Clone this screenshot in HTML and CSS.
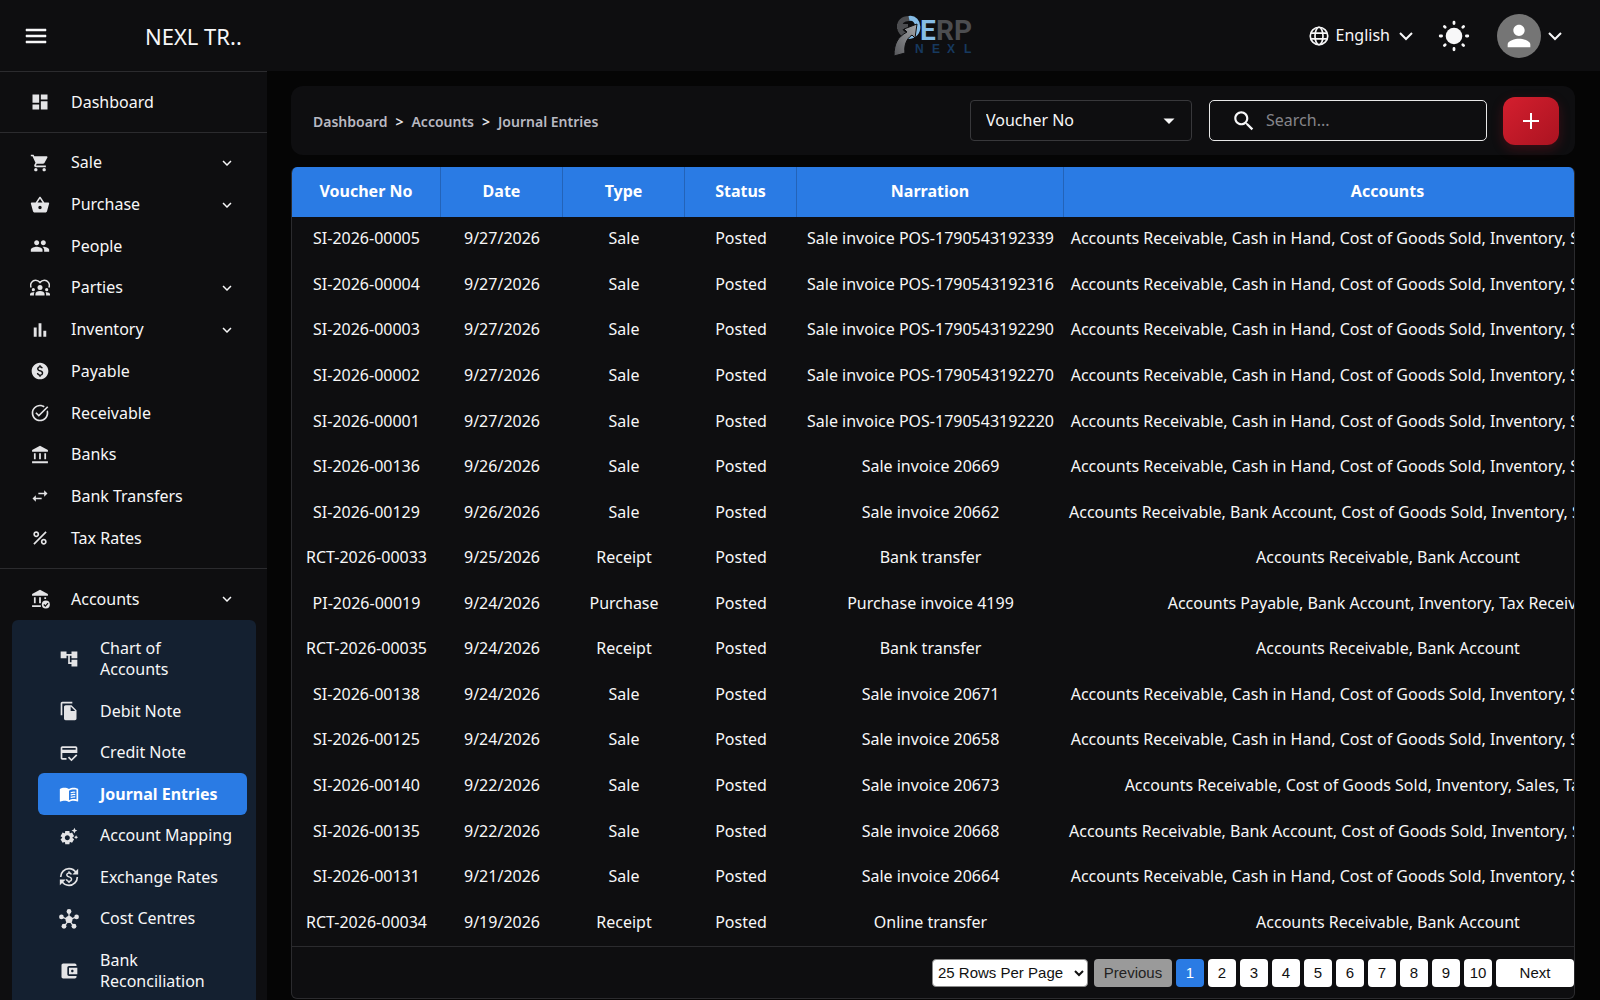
FILE: index.html
```html
<!DOCTYPE html>
<html lang="en">
<head>
<meta charset="utf-8">
<meta name="viewport" content="width=device-width, initial-scale=1">
<title>Journal Entries</title>
<link rel="stylesheet" href="styles.css">
</head>
<body>
<svg class="sprite" aria-hidden="true">
  <symbol id="i-dashboard" viewBox="0 0 24 24"><path d="M3 13h8V3H3v10zm0 8h8v-6H3v6zm10 0h8V11h-8v10zm0-18v6h8V3h-8z"/></symbol>
  <symbol id="i-cart" viewBox="0 0 24 24"><path d="M7 18c-1.1 0-1.99.9-1.99 2S5.9 22 7 22s2-.9 2-2-.9-2-2-2zM1 2v2h2l3.6 7.59-1.35 2.45c-.16.28-.25.61-.25.96 0 1.1.9 2 2 2h12v-2H7.42c-.14 0-.25-.11-.25-.25l.03-.12.9-1.63h7.45c.75 0 1.41-.41 1.75-1.03l3.58-6.49c.08-.14.12-.31.12-.48 0-.55-.45-1-1-1H5.21l-.94-2H1zm16 16c-1.1 0-1.99.9-1.99 2s.89 2 1.99 2 2-.9 2-2-.9-2-2-2z"/></symbol>
  <symbol id="i-basket" viewBox="0 0 24 24"><path d="M17.21 9l-4.38-6.56c-.19-.28-.51-.42-.83-.42-.32 0-.64.14-.83.43L6.79 9H2c-.55 0-1 .45-1 1 0 .09.01.18.04.27l2.54 9.27c.23.84 1 1.46 1.92 1.46h13c.92 0 1.69-.62 1.93-1.46l2.54-9.27L23 10c0-.55-.45-1-1-1h-4.79zM9 9l3-4.4L15 9H9zm3 8c-1.1 0-2-.9-2-2s.9-2 2-2 2 .9 2 2-.9 2-2 2z"/></symbol>
  <symbol id="i-people" viewBox="0 0 24 24"><path d="M16 11c1.66 0 2.99-1.34 2.99-3S17.66 5 16 5c-1.66 0-3 1.34-3 3s1.34 3 3 3zm-8 0c1.66 0 2.99-1.34 2.99-3S9.66 5 8 5C6.34 5 5 6.34 5 8s1.34 3 3 3zm0 2c-2.33 0-7 1.17-7 3.5V19h14v-2.5c0-2.33-4.67-3.5-7-3.5zm8 0c-.29 0-.62.02-.97.05 1.16.84 1.97 1.97 1.97 3.45V19h6v-2.5c0-2.33-4.67-3.5-7-3.5z"/></symbol>
  <symbol id="i-parties" viewBox="0 0 24 24"><path fill="none" stroke="currentColor" stroke-width="1.8" d="M1.3 11.5C-.6 6.500 3 2.800 6.800 2.800c2.500 0 4 1.200 5.200 2.700 1.200-1.500 2.700-2.700 5.200-2.700 3.800 0 7.400 3.700 5.500 8.700"/><circle cx="12" cy="11.500" r="3"/><circle cx="4" cy="14" r="1.900"/><circle cx="20" cy="14" r="1.900"/><path d="M6.500 21v-1.800c0-2.300 2.500-3.600 5.500-3.600s5.500 1.300 5.500 3.600V21zM0 21v-1.500C0 18 1.800 17 4 17c.5 0 .9 0 1.300.1-.4.700-.6 1.400-.6 2.200V21zM24 21v-1.500c0-1.500-1.800-2.500-4-2.500-.5 0-.9 0-1.300.1.400.7.600 1.400.6 2.200V21z"/></symbol>
  <symbol id="i-bars" viewBox="0 0 24 24"><path d="M4.500 9H8v11H4.500zM10.300 4h3.400v16h-3.400zM16 13h3.500v7H16z"/></symbol>
  <symbol id="i-paid" viewBox="0 0 24 24"><path d="M12 2C6.480 2 2 6.480 2 12s4.480 10 10 10 10-4.480 10-10S17.520 2 12 2zm.88 15.760V19h-1.750v-1.290c-.74-.18-2.390-.77-3.020-2.960l1.650-.67c.06.22.58 2.090 2.400 2.090.93 0 1.980-.48 1.980-1.610 0-.96-.7-1.460-2.280-2.030-1.100-.39-3.350-1.030-3.350-3.310 0-.1.010-2.400 2.620-2.960V5h1.750v1.240c1.840.32 2.510 1.790 2.660 2.230l-1.580.67c-.11-.35-.59-1.340-1.900-1.340-.7 0-1.810.37-1.810 1.390 0 .95.86 1.310 2.640 1.900 2.400.83 3.010 2.050 3.010 3.450 0 2.630-2.500 3.130-3.020 3.220z"/></symbol>
  <symbol id="i-task" viewBox="0 0 24 24"><path d="M22 5.180L10.590 16.600l-4.240-4.240 1.410-1.410 2.830 2.830 10-10L22 5.180zm-2.210 5.040c.13.57.21 1.170.21 1.780 0 4.420-3.580 8-8 8s-8-3.580-8-8 3.580-8 8-8c1.580 0 3.040.46 4.280 1.250l1.440-1.440C16.100 2.670 14.130 2 12 2 6.480 2 2 6.480 2 12s4.480 10 10 10 10-4.480 10-10c0-1.190-.22-2.330-.6-3.390l-1.610 1.610z"/></symbol>
  <symbol id="i-bank" viewBox="0 0 24 24"><path d="M12 1L2.500 6v2h19V6zM4.700 10h2.100v7H4.700zM10.950 10h2.100v7h-2.100zM17.200 10h2.100v7h-2.100zM2.500 19.500h19v2.300h-19z"/></symbol>
  <symbol id="i-swap" viewBox="0 0 24 24"><path d="M6.990 11L3 15l3.990 4v-3H14v-2H6.990v-3zM21 9l-3.990-4v3H10v2h7.010v3L21 9z"/></symbol>
  <symbol id="i-percent" viewBox="0 0 24 24"><path d="M7.500 11C9.430 11 11 9.430 11 7.500S9.430 4 7.500 4 4 5.570 4 7.500 5.570 11 7.500 11zm0-5C8.330 6 9 6.670 9 7.500S8.330 9 7.500 9 6 8.330 6 7.500 6.670 6 7.500 6zM4 18.580L18.590 4 20 5.410 5.420 20zM16.500 13c-1.930 0-3.500 1.570-3.500 3.500s1.570 3.500 3.500 3.500 3.500-1.570 3.500-3.500-1.570-3.500-3.500-3.500zm0 5c-.83 0-1.500-.67-1.500-1.500s.67-1.500 1.500-1.500 1.500.67 1.500 1.500-.67 1.500-1.500 1.500z"/></symbol>
  <symbol id="i-bankcheck" viewBox="0 0 24 24"><path d="M12 1L2.500 6v2h19V6zM4.700 10h2.100v7H4.700zM10.950 10h2.100v7h-2.100zM17.200 10h2.100v2h-2.100zM2.500 19.500H13v2.200H2.500z"/><circle cx="19" cy="18.500" r="4.800"/><path class="tick" d="M16.500 18.600l1.900 1.900 3.200-3.500"/></symbol>
  <symbol id="i-tree" viewBox="0 0 24 24"><path d="M22 11V3h-7v3H9V3H2v8h7V8h2v10h4v3h7v-8h-7v3h-2V8h2v3z"/></symbol>
  <symbol id="i-copy" viewBox="0 0 24 24"><path d="M16 1H4c-1.100 0-2 .9-2 2v14h2V3h12V1zm-1 4l6 6v10c0 1.100-.9 2-2 2H7.990C6.890 23 6 22.100 6 21l.01-14c0-1.100.89-2 1.990-2h7zm-1 7h5.500L14 6.500V12z"/></symbol>
  <symbol id="i-credit" viewBox="0 0 24 24"><path d="M20 4H4c-1.110 0-1.990.89-1.990 2L2 18c0 1.110.89 2 2 2h5v-2H4v-6h18V6c0-1.110-.89-2-2-2zm0 4H4V6h16v2zm-5.070 11.170l-2.830-2.830-1.410 1.410L14.930 22 22 14.930l-1.410-1.410-5.660 5.650z"/></symbol>
  <symbol id="i-book" viewBox="0 0 24 24"><path d="M21 5c-1.110-.35-2.330-.5-3.500-.5-1.950 0-4.050.4-5.500 1.500-1.450-1.100-3.550-1.500-5.500-1.500S2.450 4.900 1 6v14.650c0 .25.25.5.5.5.1 0 .15-.05.25-.05C3.100 20.450 5.050 20 6.500 20c1.950 0 4.050.4 5.500 1.500 1.350-.85 3.800-1.500 5.500-1.500 1.650 0 3.350.3 4.750 1.050.1.050.15.050.25.050.25 0 .5-.25.5-.5V6c-.6-.45-1.250-.75-2-1zm0 13.500c-1.100-.35-2.300-.5-3.500-.5-1.700 0-4.150.65-5.500 1.500V8c1.350-.85 3.800-1.500 5.500-1.500 1.200 0 2.400.15 3.500.5v11.500z"/><path fill="none" stroke="currentColor" stroke-width="1.500" d="M14 10.500c1.700-.7 3.800-.9 5.500-.6M14 13.300c1.700-.7 3.800-.9 5.500-.6M14 16.100c1.700-.7 3.800-.9 5.500-.6"/></symbol>
  <symbol id="i-gear" viewBox="0 0 24 24"><path d="M17.410 6.590 15 5.500l2.410-1.090L18.500 2l1.090 2.410L22 5.500l-2.410 1.090L18.500 9l-1.090-2.410zm3.870 6.130L20.500 11l-.78 1.720-1.720.78 1.720.78.78 1.720.78-1.720L23 13.500l-1.720-.78zm-5.040 1.650 1.940 1.470-2.500 4.330-2.240-.94c-.2.13-.42.26-.64.37l-.3 2.400h-5l-.3-2.410c-.22-.11-.43-.23-.64-.37l-2.240.94-2.500-4.330 1.940-1.470c-.01-.11-.01-.24-.01-.36s0-.25.010-.37l-1.940-1.470 2.500-4.330 2.240.94c.2-.13.42-.26.64-.37L7.500 6h5l.3 2.410c.22.11.43.23.64.37l2.240-.94 2.500 4.330-1.940 1.470c.010.12.010.24.010.37s0 .24-.010.36zM13 14c0-1.660-1.340-3-3-3s-3 1.340-3 3 1.340 3 3 3 3-1.340 3-3z"/></symbol>
  <symbol id="i-exchange" viewBox="0 0 24 24"><path fill="none" stroke="currentColor" stroke-width="2" d="M2 12C2 6.500 6.500 2 12 2c3.600 0 6.700 1.900 8.500 4.700M22 12c0 5.500-4.500 10-10 10-3.600 0-6.700-1.900-8.500-4.700"/><path d="M23 2v7h-7zM1 22v-7h7z"/><path transform="translate(0 .2)" d="M12.880 17.760V19h-1.750v-1.290c-.74-.18-2.390-.77-3.020-2.960l1.650-.67c.06.22.58 2.090 2.400 2.090.93 0 1.980-.48 1.980-1.610 0-.96-.7-1.460-2.280-2.030-1.100-.39-3.350-1.030-3.350-3.310 0-.1.010-2.400 2.620-2.960V5h1.750v1.240c1.840.32 2.510 1.790 2.660 2.230l-1.580.67c-.11-.35-.59-1.340-1.900-1.340-.7 0-1.810.37-1.810 1.390 0 .95.86 1.310 2.640 1.900 2.400.83 3.010 2.050 3.010 3.450 0 2.630-2.500 3.130-3.020 3.220z"/></symbol>
  <symbol id="i-hub" viewBox="0 0 24 24"><path fill="none" stroke="currentColor" stroke-width="1.600" d="M12 3v10M3 9.500l9 3.500 9-3.500M6.500 20.500L12 13l5.500 7.500"/><circle cx="12" cy="12.500" r="4.200"/><circle cx="12" cy="3" r="2.900"/><circle cx="2.900" cy="9.500" r="2.800"/><circle cx="21.100" cy="9.500" r="2.800"/><circle cx="6" cy="20.700" r="2.900"/><circle cx="18" cy="20.700" r="2.900"/></symbol>
  <symbol id="i-wallet" viewBox="0 0 24 24"><path d="M21 18v1c0 1.100-.9 2-2 2H5c-1.110 0-2-.9-2-2V5c0-1.100.89-2 2-2h14c1.100 0 2 .9 2 2v1h-9c-1.110 0-2 .9-2 2v8c0 1.100.89 2 2 2h9zm-9-2h10V8H12v8zm4-2.500c-.83 0-1.500-.67-1.500-1.500s.67-1.500 1.500-1.500 1.500.67 1.500 1.500-.67 1.500-1.500 1.500z"/></symbol>
  <symbol id="i-chevron" viewBox="0 0 24 24"><path d="M7.410 8.590L12 13.170l4.590-4.580L18 10l-6 6-6-6z"/></symbol>
</svg>

<header class="topbar">
  <button class="icon-btn menu-btn" aria-label="Toggle menu">
    <svg viewBox="0 0 24 24" width="24" height="24"><path d="M2 5h20v2H2zM2 11h20v2H2zM2 17h20v2H2z" stroke="currentColor" stroke-width=".5"/></svg>
  </button>
  <div class="company">NEXL TR..</div>
  <div class="logo">
    <svg viewBox="0 0 84 46" width="84" height="46" role="img" aria-label="ERP NEXL">
      <defs><linearGradient id="steel" x1="0" y1="1" x2="1" y2="0"><stop offset="0" stop-color="#55565a"/><stop offset="1" stop-color="#a4a6a8"/></linearGradient></defs>
      <path fill="none" stroke="#4c4d50" stroke-width="5" d="M13 22C4 22 1.500 5.500 15 5.500M3 13.500h11"/>
      <path fill="none" stroke="#85bce6" stroke-width="5" d="M15 5.500c11-2 13 18-1 18"/>
      <path fill="url(#steel)" stroke="#0e0e10" d="M0 43c0-13 4-19 13-24l-3-3 13-5-2 14-3-3c-6 4-8 11-7 18z"/>
      <g class="logo-word"><text class="logo-e" x="26" y="27">E</text><text x="42" y="27">RP</text></g>
      <text class="logo-sub" x="21 38 53 70" y="40">NEXL</text>
    </svg>
  </div>
  <div class="tools">
    <button class="lang">
      <svg class="line-icon" viewBox="0 0 24 24" width="20" height="20"><circle cx="12" cy="12" r="10.500"/><ellipse cx="12" cy="12" rx="4.800" ry="10.500"/><path d="M2.500 8.500h19M2.500 15.500h19"/></svg>
      <span>English</span>
      <svg class="caret" viewBox="0 0 24 24" width="24" height="24"><path d="M6 9l6 6 6-6"/></svg>
    </button>
    <button class="icon-btn" aria-label="Light theme">
      <svg viewBox="0 0 32 32" width="32" height="32"><circle cx="16" cy="16" r="8.300"/><path fill="none" stroke="currentColor" stroke-width="2.800" stroke-linecap="round" d="M16 2.200v1.400M16 28.400v1.400M2.200 16h1.400M28.400 16h1.400M6.400 6.400l.8.8M24.800 24.800l.8.8M6.400 25.600l.8-.8M24.800 7.200l.8-.8"/></svg>
    </button>
    <button class="account" aria-label="Account">
      <span class="avatar"><svg viewBox="0 0 24 24" width="34" height="34"><path d="M12 12c2.210 0 4-1.790 4-4s-1.790-4-4-4-4 1.790-4 4 1.790 4 4 4zm0 2c-2.670 0-8 1.340-8 4v2h16v-2c0-2.660-5.330-4-8-4z"/></svg></span>
      <svg class="caret" viewBox="0 0 24 24" width="24" height="24"><path d="M6 9l6 6 6-6"/></svg>
    </button>
  </div>
</header>

<div class="shell">
  <nav class="sidebar" aria-label="Main">
    <ul class="nav-group">
      <li><a class="nav-item" href="#"><svg class="ico"><use href="#i-dashboard"/></svg><span>Dashboard</span></a></li>
    </ul>
    <ul class="nav-group ledger">
      <li><button class="nav-item"><svg class="ico"><use href="#i-cart"/></svg><span>Sale</span><svg class="more"><use href="#i-chevron"/></svg></button></li>
      <li><button class="nav-item"><svg class="ico"><use href="#i-basket"/></svg><span>Purchase</span><svg class="more"><use href="#i-chevron"/></svg></button></li>
      <li><a class="nav-item" href="#"><svg class="ico"><use href="#i-people"/></svg><span>People</span></a></li>
      <li><button class="nav-item"><svg class="ico"><use href="#i-parties"/></svg><span>Parties</span><svg class="more"><use href="#i-chevron"/></svg></button></li>
      <li><button class="nav-item"><svg class="ico"><use href="#i-bars"/></svg><span>Inventory</span><svg class="more"><use href="#i-chevron"/></svg></button></li>
      <li><a class="nav-item" href="#"><svg class="ico"><use href="#i-paid"/></svg><span>Payable</span></a></li>
      <li><a class="nav-item" href="#"><svg class="ico"><use href="#i-task"/></svg><span>Receivable</span></a></li>
      <li><a class="nav-item" href="#"><svg class="ico"><use href="#i-bank"/></svg><span>Banks</span></a></li>
      <li><a class="nav-item" href="#"><svg class="ico"><use href="#i-swap"/></svg><span>Bank Transfers</span></a></li>
      <li><a class="nav-item" href="#"><svg class="ico"><use href="#i-percent"/></svg><span>Tax Rates</span></a></li>
    </ul>
    <ul class="nav-group">
      <li><button class="nav-item" aria-expanded="true"><svg class="ico"><use href="#i-bankcheck"/></svg><span>Accounts</span><svg class="more"><use href="#i-chevron"/></svg></button>
        <ul class="subnav">
          <li><a class="nav-item two-line" href="#"><svg class="ico"><use href="#i-tree"/></svg><span>Chart of Accounts</span></a></li>
          <li><a class="nav-item" href="#"><svg class="ico"><use href="#i-copy"/></svg><span>Debit Note</span></a></li>
          <li><a class="nav-item" href="#"><svg class="ico"><use href="#i-credit"/></svg><span>Credit Note</span></a></li>
          <li><a class="nav-item active" href="#" aria-current="page"><svg class="ico"><use href="#i-book"/></svg><span>Journal Entries</span></a></li>
          <li><a class="nav-item" href="#"><svg class="ico"><use href="#i-gear"/></svg><span>Account Mapping</span></a></li>
          <li><a class="nav-item" href="#"><svg class="ico"><use href="#i-exchange"/></svg><span>Exchange Rates</span></a></li>
          <li><a class="nav-item" href="#"><svg class="ico"><use href="#i-hub"/></svg><span>Cost Centres</span></a></li>
          <li><a class="nav-item two-line" href="#"><svg class="ico"><use href="#i-wallet"/></svg><span>Bank Reconciliation</span></a></li>
        </ul>
      </li>
    </ul>
  </nav>

  <main class="content">
    <div class="toolbar">
      <nav class="crumbs" aria-label="Breadcrumb">
        <a href="#">Dashboard</a><span>&gt;</span><a href="#">Accounts</a><span>&gt;</span><a href="#">Journal Entries</a>
      </nav>
      <div class="filter">
        <select aria-label="Search by"><option>Voucher No</option></select>
        <svg viewBox="0 0 24 24" width="24" height="24"><path d="M6.500 9.500l5.500 5.500 5.500-5.500z"/></svg>
      </div>
      <label class="search">
        <svg viewBox="0 0 24 24" width="26" height="26"><path d="M15.500 14h-.79l-.28-.27C15.410 12.590 16 11.110 16 9.500 16 5.910 13.090 3 9.500 3S3 5.910 3 9.500 5.910 16 9.500 16c1.610 0 3.090-.59 4.230-1.570l.27.28v.79l5 4.990L20.490 19l-4.990-5zm-6 0C7.010 14 5 11.990 5 9.500S7.010 5 9.500 5 14 7.010 14 9.500 11.990 14 9.500 14z"/></svg>
        <input type="text" placeholder="Search..." aria-label="Search">
      </label>
      <button class="add" aria-label="Add journal entry"><svg viewBox="0 0 16 16" width="16" height="16"><path d="M7 0h2v7h7v2H9v7H7V9H0V7h7z"/></svg></button>
    </div>

    <section class="panel">
      <div class="scroller">
        <table class="entries">
          <colgroup><col class="c-no"><col class="c-date"><col class="c-type"><col class="c-status"><col class="c-narr"><col class="c-acc"></colgroup>
          <thead><tr><th>Voucher No</th><th>Date</th><th>Type</th><th>Status</th><th>Narration</th><th>Accounts</th></tr></thead>
          <tbody>
            <tr><td>SI-2026-00005</td><td>9/27/2026</td><td>Sale</td><td>Posted</td><td>Sale invoice POS-1790543192339</td><td>Accounts Receivable, Cash in Hand, Cost of Goods Sold, Inventory, Sales, Tax Payable</td></tr>
            <tr><td>SI-2026-00004</td><td>9/27/2026</td><td>Sale</td><td>Posted</td><td>Sale invoice POS-1790543192316</td><td>Accounts Receivable, Cash in Hand, Cost of Goods Sold, Inventory, Sales, Tax Payable</td></tr>
            <tr><td>SI-2026-00003</td><td>9/27/2026</td><td>Sale</td><td>Posted</td><td>Sale invoice POS-1790543192290</td><td>Accounts Receivable, Cash in Hand, Cost of Goods Sold, Inventory, Sales, Tax Payable</td></tr>
            <tr><td>SI-2026-00002</td><td>9/27/2026</td><td>Sale</td><td>Posted</td><td>Sale invoice POS-1790543192270</td><td>Accounts Receivable, Cash in Hand, Cost of Goods Sold, Inventory, Sales, Tax Payable</td></tr>
            <tr><td>SI-2026-00001</td><td>9/27/2026</td><td>Sale</td><td>Posted</td><td>Sale invoice POS-1790543192220</td><td>Accounts Receivable, Cash in Hand, Cost of Goods Sold, Inventory, Sales, Tax Payable</td></tr>
            <tr><td>SI-2026-00136</td><td>9/26/2026</td><td>Sale</td><td>Posted</td><td>Sale invoice 20669</td><td>Accounts Receivable, Cash in Hand, Cost of Goods Sold, Inventory, Sales, Tax Payable</td></tr>
            <tr><td>SI-2026-00129</td><td>9/26/2026</td><td>Sale</td><td>Posted</td><td>Sale invoice 20662</td><td>Accounts Receivable, Bank Account, Cost of Goods Sold, Inventory, Sales, Tax Payable</td></tr>
            <tr><td>RCT-2026-00033</td><td>9/25/2026</td><td>Receipt</td><td>Posted</td><td>Bank transfer</td><td>Accounts Receivable, Bank Account</td></tr>
            <tr><td>PI-2026-00019</td><td>9/24/2026</td><td>Purchase</td><td>Posted</td><td>Purchase invoice 4199</td><td>Accounts Payable, Bank Account, Inventory, Tax Receivable</td></tr>
            <tr><td>RCT-2026-00035</td><td>9/24/2026</td><td>Receipt</td><td>Posted</td><td>Bank transfer</td><td>Accounts Receivable, Bank Account</td></tr>
            <tr><td>SI-2026-00138</td><td>9/24/2026</td><td>Sale</td><td>Posted</td><td>Sale invoice 20671</td><td>Accounts Receivable, Cash in Hand, Cost of Goods Sold, Inventory, Sales, Tax Payable</td></tr>
            <tr><td>SI-2026-00125</td><td>9/24/2026</td><td>Sale</td><td>Posted</td><td>Sale invoice 20658</td><td>Accounts Receivable, Cash in Hand, Cost of Goods Sold, Inventory, Sales, Tax Payable</td></tr>
            <tr><td>SI-2026-00140</td><td>9/22/2026</td><td>Sale</td><td>Posted</td><td>Sale invoice 20673</td><td>Accounts Receivable, Cost of Goods Sold, Inventory, Sales, Tax Payable</td></tr>
            <tr><td>SI-2026-00135</td><td>9/22/2026</td><td>Sale</td><td>Posted</td><td>Sale invoice 20668</td><td>Accounts Receivable, Bank Account, Cost of Goods Sold, Inventory, Sales, Tax Payable</td></tr>
            <tr><td>SI-2026-00131</td><td>9/21/2026</td><td>Sale</td><td>Posted</td><td>Sale invoice 20664</td><td>Accounts Receivable, Cash in Hand, Cost of Goods Sold, Inventory, Sales, Tax Payable</td></tr>
            <tr><td>RCT-2026-00034</td><td>9/19/2026</td><td>Receipt</td><td>Posted</td><td>Online transfer</td><td>Accounts Receivable, Bank Account</td></tr>
          </tbody>
        </table>
      </div>
      <div class="pager">
        <select aria-label="Rows per page"><option>25 Rows Per Page</option></select>
        <div class="pages">
          <button class="wide" disabled>Previous</button>
          <button class="current" aria-current="page">1</button>
          <button>2</button><button>3</button><button>4</button><button>5</button><button>6</button><button>7</button><button>8</button><button>9</button><button>10</button>
          <button class="wide">Next</button>
        </div>
      </div>
    </section>
  </main>
</div>
</body>
</html>
```
FILE: styles.css
```css
:root {
  --bg: #050505;
  --surface: #0e0e10;
  --line: #2b2b2e;
  --blue: #2a7be4;
  --text: #f7f7f8;
}

* { box-sizing: border-box; }

body {
  margin: 0;
  height: 100vh;
  display: flex;
  flex-direction: column;
  overflow: hidden;
  background: var(--bg);
  color: var(--text);
  font: 16px/21px "Noto Sans", sans-serif;
}

button, input, select { font: inherit; color: inherit; }
button { background: none; border: 0; padding: 0; cursor: pointer; }
a { color: inherit; text-decoration: none; }
ul { list-style: none; margin: 0; padding: 0; }
svg { fill: currentColor; display: block; flex: none; }
.sprite { position: absolute; width: 0; height: 0; }

/* Top bar */
.topbar {
  flex: none;
  height: 71px;
  display: flex;
  align-items: center;
  padding: 0 33px 0 24px;
  background: var(--surface);
}
.icon-btn { display: flex; }
.company {
  width: 194px;
  padding-left: 97px;
  font-size: 22px;
  line-height: 32px;
  white-space: nowrap;
}
.logo { flex: 1; display: flex; justify-content: center; padding-left: 322px; }
.logo-word { font: 700 28px Roboto, sans-serif; fill: #4c4d50; }
.logo-e { fill: #85bce6; }
.logo-sub { font: 700 12px "Liberation Sans", sans-serif; fill: #17395f; }
.tools { display: flex; align-items: center; }
.lang { display: flex; align-items: center; margin-right: 20px; }
.lang span { margin: 0 4px 0 7px; }
.line-icon { fill: none; stroke: currentColor; stroke-width: 2; }
.caret path { fill: none; stroke: currentColor; stroke-width: 2; }
.account { display: flex; align-items: center; gap: 2px; margin-left: 27px; }
.avatar {
  width: 44px;
  height: 44px;
  border-radius: 50%;
  display: flex;
  align-items: center;
  justify-content: center;
  background: #757575;
  color: #fff;
}

.shell { flex: 1; min-height: 0; display: flex; }

/* Sidebar */
.sidebar {
  flex: none;
  width: 267px;
  overflow: hidden;
  background: var(--surface);
}
.nav-group { padding: 9px 0; border-top: 1px solid var(--line); }
.ledger { display: grid; grid-auto-rows: 1fr; min-height: 436px; }
.nav-item {
  display: flex;
  align-items: center;
  width: 100%;
  height: 100%;
  min-height: 41px;
  padding: 0 31px 0 30px;
  text-align: left;
}
.nav-group > li > .nav-item { min-height: 42px; }
.ledger > li > .nav-item { min-height: 41px; }
.nav-item span { flex: 1; margin-left: 21px; }
.ico { width: 20px; height: 20px; color: #e4e4e6; }
.tick { fill: none; stroke: var(--surface); stroke-width: 1.5; }
.more { width: 18px; height: 18px; }
.subnav {
  display: grid;
  grid-template-rows: 3fr repeat(6, 2fr) 3fr;
  min-height: 390px;
  margin: 0 11px 0 12px;
  padding: 8px 9px 8px 26px;
  border-radius: 6px;
  background: #142030;
}
.subnav .nav-item { padding: 0 8px 0 21px; border-radius: 6px; }
.subnav .two-line { padding-right: 24px; }
.nav-item.active { background: var(--blue); font-weight: 700; color: #fff; }
.active .ico { color: #fff; }

/* Content */
.content {
  flex: 1;
  min-width: 0;
  display: flex;
  flex-direction: column;
  gap: 12px;
  padding: 15px 25px 1px 24px;
}
.toolbar {
  flex: none;
  height: 69px;
  display: flex;
  align-items: center;
  padding: 0 16px 0 22px;
  border-radius: 12px;
  background: var(--surface);
}
.crumbs {
  flex: 1;
  display: flex;
  gap: 8px;
  padding-top: 2px;
  font-size: 14px;
  font-weight: 600;
  color: #b9b9c2;
}
.crumbs span { color: #e6e6ea; }
.filter { position: relative; width: 222px; height: 41px; }
.filter select {
  width: 100%;
  height: 100%;
  padding: 0 15px;
  appearance: none;
  background: var(--surface);
  border: 1px solid #38383b;
  border-radius: 4px;
}
.filter svg { position: absolute; right: 11px; top: 9px; pointer-events: none; }
.search {
  display: flex;
  align-items: center;
  gap: 9px;
  width: 278px;
  height: 41px;
  margin: 0 16px 0 17px;
  padding-left: 21px;
  border: 1px solid #e8e8e8;
  border-radius: 5px;
}
.search input { flex: 1; min-width: 0; padding: 0; border: 0; outline: 0; background: none; }
.search input::placeholder { color: #85858a; opacity: 1; }
.add {
  width: 56px;
  height: 48px;
  display: flex;
  align-items: center;
  justify-content: center;
  border-radius: 12px;
  background: linear-gradient(135deg, #d41f2e, #ab1321);
  box-shadow: 0 4px 12px rgba(200, 20, 40, .25);
  color: #fff;
}

/* Entries table */
.panel {
  flex: 1;
  min-height: 0;
  display: flex;
  flex-direction: column;
  border: 1px solid var(--line);
  border-top: 0;
  border-radius: 6px;
  overflow: hidden;
  background: var(--surface);
}
.scroller { flex: 1; min-height: 0; overflow: auto; scrollbar-width: none; }
.entries {
  table-layout: fixed;
  width: 1420px;
  height: 100%;
  border-collapse: separate;
  border-spacing: 0;
  text-align: center;
  white-space: nowrap;
}
.c-no { width: 149px; }
.c-date, .c-type { width: 122px; }
.c-status { width: 112px; }
.c-narr { width: 267px; }
.c-acc { width: 648px; }
th {
  height: 50px;
  padding: 0 0 2px;
  font-weight: 700;
  color: #fff;
  background: var(--blue);
  border-right: 1px solid #2363b8;
}
td { padding: 0 0 2px; }

.pager {
  flex: none;
  height: 52px;
  display: flex;
  align-items: center;
  justify-content: flex-end;
  gap: 6px;
  border-top: 1px solid var(--line);
  font: 15px/20px "Liberation Sans", Arial, sans-serif;
}
.pager select {
  width: 156px;
  height: 28px;
  padding: 0 1px;
  color: #111;
  background: #fff;
  border: 1px solid #8a8a8a;
  border-radius: 4px;
}
.pages { display: flex; gap: 4px; }
.pages button {
  width: 28px;
  height: 28px;
  border-radius: 4px;
  background: #fff;
  color: #111;
}
.pages .wide { width: 78px; }
.pages button:disabled { background: #9a9a9a; color: #222; }
.pages .current { background: var(--blue); color: #fff; }
```
